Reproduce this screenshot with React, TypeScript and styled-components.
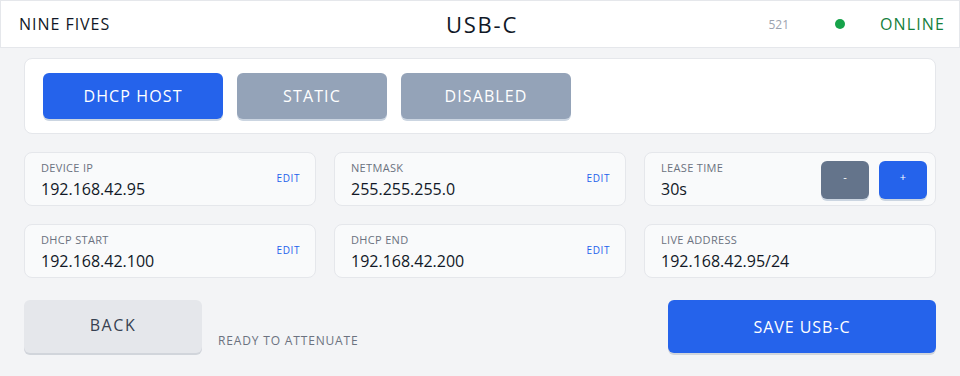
import styled, { createGlobalStyle } from "styled-components"

const GlobalStyle = createGlobalStyle`
  html, body {
    margin: 0;
    padding: 0;
    background: #f3f4f6;
    font-family: "Open Sans", "Noto Sans", sans-serif;
  }
  * { box-sizing: border-box; }
`

const fields = [
  { label: 'DEVICE IP', value: '192.168.42.95', edit: true },
  { label: 'NETMASK', value: '255.255.255.0', edit: true },
  { label: 'LEASE TIME', value: '30s', stepper: true },
  { label: 'DHCP START', value: '192.168.42.100', edit: true },
  { label: 'DHCP END', value: '192.168.42.200', edit: true },
  { label: 'LIVE ADDRESS', value: '192.168.42.95/24' },
]

const modes = [
  { name: 'DHCP HOST', width: 180, active: true },
  { name: 'STATIC', width: 150 },
  { name: 'DISABLED', width: 170 },
]

const App = () => {
  return (
    <Page>
      <GlobalStyle />
      <Header>
        <Brand>NINE FIVES</Brand>
        <Title>USB-C</Title>
        <Status>
          <Counter>521</Counter>
          <Dot />
          <Online>ONLINE</Online>
        </Status>
      </Header>
      <Main>
        <ModeCard>
          {modes.map((m) => (
            <ModeButton key={m.name} $width={m.width} $active={m.active}>{m.name}</ModeButton>
          ))}
        </ModeCard>
        <FieldGrid>
          {fields.map((f) => (
            <Field key={f.label}>
              <FieldText>
                <FieldLabel>{f.label}</FieldLabel>
                <FieldValue>{f.value}</FieldValue>
              </FieldText>
              {f.edit && <EditLink>EDIT</EditLink>}
              {f.stepper && (
                <Stepper>
                  <StepButton $variant="minus">-</StepButton>
                  <StepButton $variant="plus">+</StepButton>
                </Stepper>
              )}
            </Field>
          ))}
        </FieldGrid>
        <Footer>
          <BackGroup>
            <BackButton>BACK</BackButton>
            <StatusText>READY TO ATTENUATE</StatusText>
          </BackGroup>
          <SaveButton>SAVE USB-C</SaveButton>
        </Footer>
      </Main>
    </Page>
  )
}

const Page = styled.div`
  width: 960px;
  height: 376px;
  background: #f3f4f6;
  overflow: hidden;
`

const Header = styled.header`
  height: 48px;
  background: #ffffff;
  border: 1px solid #e5e7eb;
  display: grid;
  grid-template-columns: 1fr auto 1fr;
  align-items: center;
  padding: 0 14px 0 18px;
`

const Brand = styled.div`
  font-size: 16px;
  color: #111827;
  letter-spacing: 0.06em;
`

const Title = styled.div`
  font-size: 22px;
  color: #111827;
  letter-spacing: 0.08em;
`

const Status = styled.div`
  display: flex;
  align-items: center;
  justify-content: flex-end;
`

const Counter = styled.span`
  font-size: 12px;
  color: #9ca3af;
  margin-right: 46px;
`

const Dot = styled.span`
  width: 10px;
  height: 10px;
  border-radius: 50%;
  background: #16a34a;
  margin-right: 35px;
`

const Online = styled.span`
  font-size: 16px;
  color: #15803d;
  letter-spacing: 0.07em;
`

const Main = styled.main`
  padding: 10px 24px 0;
  display: flex;
  flex-direction: column;
`

const ModeCard = styled.div`
  height: 76px;
  background: #ffffff;
  border: 1px solid #e5e7eb;
  border-radius: 8px;
  display: flex;
  align-items: center;
  gap: 14px;
  padding: 0 18px 4px;
`

const ModeButton = styled.button<{ $width: number; $active?: boolean }>`
  width: ${(p) => p.$width}px;
  height: 46px;
  border: none;
  border-radius: 6px;
  background: ${(p) => (p.$active ? '#2563eb' : '#94a3b8')};
  box-shadow: 0 2px 0 #cbd5e1;
  color: #ffffff;
  font-family: inherit;
  font-size: 16px;
  letter-spacing: 0.07em;
  margin-top: 4px;
`

const FieldGrid = styled.div`
  display: grid;
  grid-template-columns: repeat(3, 1fr);
  column-gap: 18px;
  row-gap: 18px;
  margin-top: 18px;
`

const Field = styled.div`
  height: 54px;
  background: #f9fafb;
  border: 1px solid #e5e7eb;
  border-radius: 8px;
  display: flex;
  align-items: center;
  padding: 0 8px 0 16px;
`

const FieldText = styled.div`
  flex: 1;
  display: flex;
  flex-direction: column;
  padding-top: 2px;
`

const FieldLabel = styled.div`
  font-size: 11px;
  color: #6b7280;
  line-height: 14px;
  letter-spacing: 0.03em;
`

const FieldValue = styled.div`
  font-size: 16px;
  color: #111827;
  line-height: 22px;
  margin-top: 3px;
`

const EditLink = styled.span`
  font-size: 10px;
  color: #2563eb;
  letter-spacing: 0.06em;
  margin-right: 7px;
  margin-bottom: 3px;
`

const Stepper = styled.div`
  display: flex;
  gap: 10px;
  align-self: flex-start;
  margin-top: 8px;
`

const StepButton = styled.button<{ $variant: 'minus' | 'plus' }>`
  width: 48px;
  height: 38px;
  border: none;
  border-radius: 6px;
  background: ${(p) => (p.$variant === 'plus' ? '#2563eb' : '#64748b')};
  box-shadow: 0 2px 0 #cbd5e1;
  color: #ffffff;
  font-family: inherit;
  font-size: 11px;
  padding-bottom: 8px;
`

const Footer = styled.div`
  display: flex;
  justify-content: space-between;
  align-items: flex-start;
  margin-top: 22px;
`

const BackGroup = styled.div`
  display: flex;
  align-items: flex-end;
  gap: 16px;
`

const BackButton = styled.button`
  width: 178px;
  height: 53px;
  border: none;
  border-radius: 6px;
  background: #e5e7eb;
  box-shadow: 0 2px 0 #d1d5db;
  color: #374151;
  font-family: inherit;
  font-size: 16px;
  letter-spacing: 0.1em;
  padding-bottom: 5px;
`

const StatusText = styled.span`
  font-size: 12px;
  color: #6b7280;
  letter-spacing: 0.07em;
  margin-bottom: 4px;
`

const SaveButton = styled.button`
  width: 268px;
  height: 53px;
  border: none;
  border-radius: 6px;
  background: #2563eb;
  box-shadow: 0 2px 0 #d1d5db;
  color: #ffffff;
  font-family: inherit;
  font-size: 16px;
  letter-spacing: 0.06em;
`

export default App
